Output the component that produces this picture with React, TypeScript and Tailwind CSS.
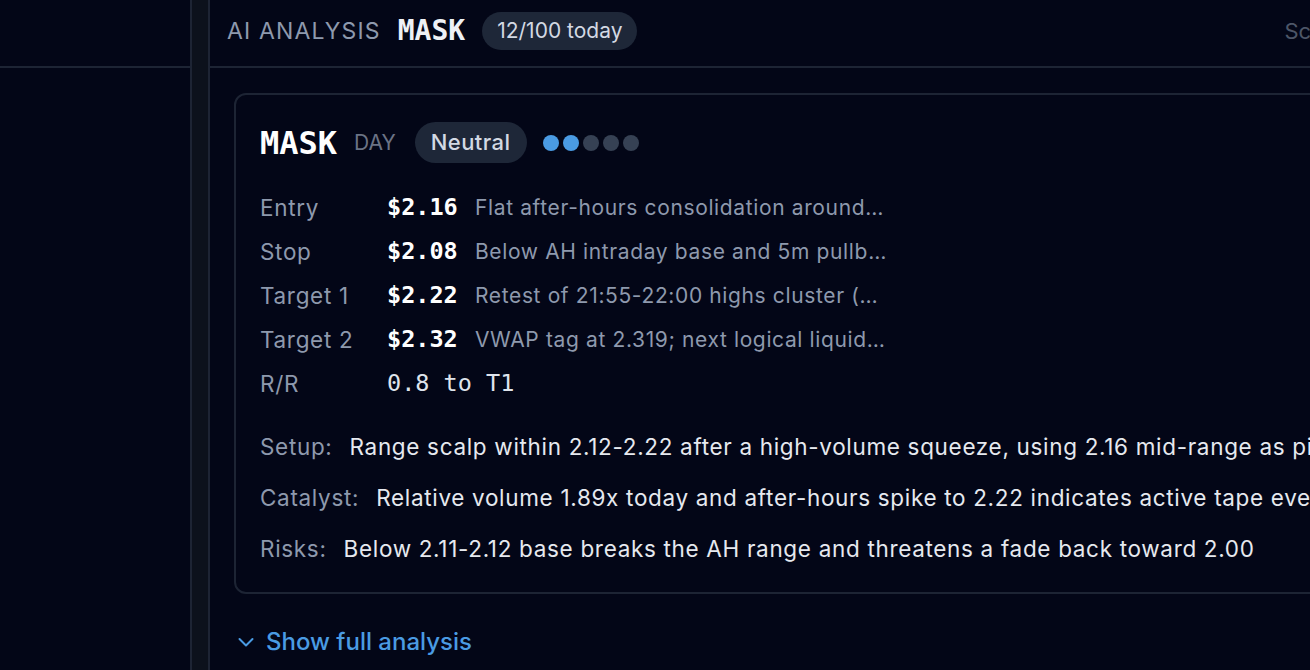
type Level = {
  label: string;
  price: string;
  note: string;
};

const levels: Level[] = [
  { label: "Entry", price: "$2.16", note: "Flat after-hours consolidation around 2.16 mid-range with tight spreads" },
  { label: "Stop", price: "$2.08", note: "Below AH intraday base and 5m pullback lows near 2.10" },
  { label: "Target 1", price: "$2.22", note: "Retest of 21:55-22:00 highs cluster (2.22 prints)" },
  { label: "Target 2", price: "$2.32", note: "VWAP tag at 2.319; next logical liquidity pocket above" },
];

const notes = [
  {
    label: "Setup:",
    text: "Range scalp within 2.12-2.22 after a high-volume squeeze, using 2.16 mid-range as pivot for the next push",
  },
  {
    label: "Catalyst:",
    text: "Relative volume 1.89x today and after-hours spike to 2.22 indicates active tape even after the close",
  },
  { label: "Risks:", text: "Below 2.11-2.12 base breaks the AH range and threatens a fade back toward 2.00" },
];

const mono = "font-['DejaVu_Sans_Mono',monospace]";

function Confidence({ value, max = 5 }: { value: number; max?: number }) {
  return (
    <div className="flex items-center gap-1">
      {Array.from({ length: max }).map((_, i) => (
        <span
          key={i}
          className={i < value ? "size-4 rounded-full bg-[#4a9be3]" : "size-4 rounded-full bg-[#364154]"}
        />
      ))}
    </div>
  );
}

function AnalysisCard() {
  return (
    <div className="rounded-xl border-2 border-[#1d2434] px-6 pb-[28px] pt-[27px]">
      <div className="flex h-[41px] items-center">
        <span className={`${mono} text-[32px] font-bold leading-none text-white`}>MASK</span>
        <span className="ml-[17px] text-[21px] text-[#6b7385]">DAY</span>
        <span className="ml-[19px] flex h-[41px] items-center rounded-full bg-[#1e2738] px-[16px] text-[22px] font-medium tracking-[0.02em] text-[#d3d9e3]">
          Neutral
        </span>
        <div className="ml-4">
          <Confidence value={2} />
        </div>
      </div>

      <div className="mt-[23px] flex flex-col">
        {levels.map((row) => (
          <div key={row.label} className="flex h-11 items-center">
            <span className="w-[127px] shrink-0 text-[22.5px] tracking-[0.03em] text-[#8e99ad]">{row.label}</span>
            <span className={`${mono} w-[88px] shrink-0 text-[23.5px] font-bold text-white`}>{row.price}</span>
            <span className="w-[414px] truncate text-[21px] tracking-[0.03em] text-[#8e99ad]">{row.note}</span>
          </div>
        ))}
        <div className="flex h-11 items-center">
          <span className="w-[127px] shrink-0 text-[22.5px] tracking-[0.03em] text-[#8e99ad]">R/R</span>
          <span className={`${mono} text-[23.5px] text-[#dfe4ec]`}>0.8 to T1</span>
        </div>
      </div>

      <div className="mt-[26px] flex flex-col gap-[21px]">
        {notes.map((n) => (
          <p
            key={n.label}
            className="whitespace-nowrap text-[22.5px] leading-[30px] tracking-[0.03em] text-[#e6e9ef]"
          >
            <span className="mr-[17px] text-[#8e99ad]">{n.label}</span>
            {n.text}
          </p>
        ))}
      </div>
    </div>
  );
}

export default function App() {
  return (
    <div className="flex h-[670px] w-[1310px] overflow-hidden bg-[#030617] font-['Inter',sans-serif]">
      {/* ticker list column, collapsed */}
      <aside className="w-[190px] shrink-0">
        <div className="h-[68px] border-b-2 border-[#1d2434]" />
      </aside>

      {/* resize handle */}
      <div className="w-5 shrink-0 border-x-2 border-[#1d2434] bg-[#0c111c]" />

      <main className="w-[1400px] shrink-0">
        <header className="flex h-[68px] items-center border-b-2 border-[#1d2434] pb-[4px] pl-[17px]">
          <span className="text-[23px] tracking-wider text-[#8e99ad]">AI ANALYSIS</span>
          <span className={`${mono} ml-[17px] text-[28px] font-bold text-[#eef1f6]`}>MASK</span>
          <span className="ml-[17px] flex h-[38px] items-center rounded-full bg-[#1e2738] px-[15px] text-[21px] text-[#d3d9e3]">
            12/100 today
          </span>
          <span className="ml-[647px] text-[22px] text-[#4d5668]">Scanner</span>
        </header>

        <div className="px-6 pt-[25px]">
          <AnalysisCard />
          <button className="mt-[30px] flex items-center gap-[12px] pl-[4px] text-[24px] font-medium text-[#4a9be3]">
            <svg width="16" height="10" viewBox="0 0 16 10" fill="none" aria-hidden>
              <path
                d="M1.5 2l6.5 6.5L14.5 2"
                stroke="currentColor"
                strokeWidth="2"
                strokeLinecap="round"
                strokeLinejoin="round"
              />
            </svg>
            Show full analysis
          </button>
        </div>
      </main>
    </div>
  );
}
